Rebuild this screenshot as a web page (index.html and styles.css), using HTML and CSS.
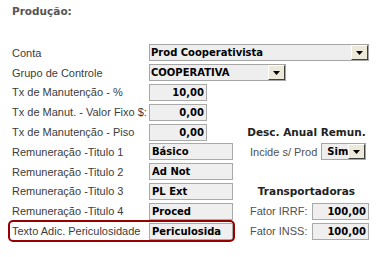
FILE: index.html
```html
<html>
<head>
<meta charset="utf-8">
<link rel="stylesheet" href="styles.css">
</head>
<body>
	<div class="title">Produção:</div>
	<div class="form">
		<div class="label">Conta</div>
		<div class="select wide"><span class="value">Prod Cooperativista</span><span class="drop"><svg width="7" height="4" viewBox="0 0 7 4"><path d="M0 0H7L3.5 4Z" fill="#000"/></svg></span></div>

		<div class="label">Grupo de Controle</div>
		<div class="select mid"><span class="value">COOPERATIVA</span><span class="drop"><svg width="7" height="4" viewBox="0 0 7 4"><path d="M0 0H7L3.5 4Z" fill="#000"/></svg></span></div>

		<div class="label">Tx de Manutenção - %</div>
		<div class="field"><div class="input num">10,00</div></div>
		<div class="empty"></div>

		<div class="label">Tx de Manut. - Valor Fixo $:</div>
		<div class="field"><div class="input num">0,00</div></div>
		<div class="empty"></div>

		<div class="label">Tx de Manutenção - Piso</div>
		<div class="field"><div class="input num">0,00</div></div>
		<div class="heading">Desc. Anual Remun.</div>

		<div class="label">Remuneração -Titulo 1</div>
		<div class="field"><div class="input text">Básico</div></div>
		<div class="pair">
			<span class="side_label">Incide s/ Prod</span>
			<div class="select small"><span class="value">Sim</span><span class="drop"><svg width="7" height="4" viewBox="0 0 7 4"><path d="M0 0H7L3.5 4Z" fill="#000"/></svg></span></div>
		</div>

		<div class="label">Remuneração -Titulo 2</div>
		<div class="field"><div class="input text">Ad Not</div></div>
		<div class="empty"></div>

		<div class="label">Remuneração -Titulo 3</div>
		<div class="field"><div class="input text">PL Ext</div></div>
		<div class="heading">Transportadoras</div>

		<div class="label">Remuneração -Titulo 4</div>
		<div class="field"><div class="input text">Proced</div></div>
		<div class="pair">
			<span class="side_label fator">Fator IRRF:</span>
			<div class="input num short">100,00</div>
		</div>

		<div class="label last">Texto Adic. Periculosidade</div>
		<div class="field last"><div class="input text">Periculosida</div></div>
		<div class="pair last">
			<span class="side_label fator">Fator INSS:</span>
			<div class="input num short">100,00</div>
		</div>
		<div class="highlight"></div>
	</div>
</body>
</html>
```
FILE: styles.css
```css
*
{
	box-sizing: border-box;
}

body
{
	margin: 0;
	padding: 0;
	background: #ffffff;
	font-family: "Liberation Sans", Arial, sans-serif;
	font-size: 11px;
	color: #3c3c3c;
}

.title
{
	padding: 5px 0 0 12px;
	height: 43px;
	font-family: "DejaVu Sans", sans-serif;
	font-size: 10.5px;
	font-weight: bold;
	color: #555555;
}

.form
{
	display: grid;
	grid-template-columns: 137px 101px 119px;
	grid-template-rows: repeat(10, 19.8px);
	padding-left: 12px;
	width: 389px;
}

.label
{
	display: flex;
	align-items: center;
	white-space: nowrap;
}

.field
{
	display: flex;
	align-items: center;
}

.input
{
	height: 17px;
	line-height: 15px;
	border: 1px solid #a9a9a9;
	background: #efefef;
	color: #000000;
	font-family: "DejaVu Sans", sans-serif;
	font-size: 10px;
	font-weight: bold;
	padding: 0 2px;
	white-space: nowrap;
	overflow: hidden;
}

.input.num
{
	width: 58px;
	text-align: right;
}

.input.text
{
	width: 84px;
}

.input.short
{
	width: 57px;
}

.select
{
	display: flex;
	align-items: center;
	height: 17px;
	border: 1px solid #a5a5a5;
	background: #eeeeee;
	color: #000000;
	font-family: "DejaVu Sans", sans-serif;
	font-size: 10px;
	font-weight: bold;
	align-self: center;
}

.select .value
{
	flex: 1;
	padding-left: 1px;
	white-space: nowrap;
	overflow: hidden;
}

.select .drop
{
	display: flex;
	align-items: center;
	justify-content: center;
	width: 17px;
	height: 15px;
	background: #ece9d8;
	border-top: 1px solid #ffffff;
	border-left: 1px solid #ffffff;
	border-right: 1px solid #404040;
	border-bottom: 1px solid #404040;
}

.select.wide
{
	grid-column: 2 / 4;
	width: 220px;
}

.select.mid
{
	grid-column: 2 / 4;
	width: 137px;
}

.select.small
{
	width: 45px;
}

.select.small .value
{
	padding-left: 5px;
}

.heading
{
	display: flex;
	align-items: center;
	justify-content: center;
	font-family: "DejaVu Sans", sans-serif;
	font-size: 10.5px;
	font-weight: bold;
	color: #222222;
	padding-right: 6px;
	white-space: nowrap;
}

.pair
{
	display: flex;
	align-items: center;
	gap: 4px;
	white-space: nowrap;
}

.side_label
{
	color: #505050;
}

.side_label.fator
{
	width: 58px;
}

.last
{
	grid-row: 10;
}

.label.last
{
	grid-column: 1;
}

.field.last
{
	grid-column: 2;
}

.pair.last
{
	grid-column: 3;
}

.highlight
{
	grid-row: 10;
	grid-column: 1 / 3;
	margin: -1px 15px -1px -4px;
	border: 2px solid #990000;
	border-radius: 5px;
	pointer-events: none;
}
```
